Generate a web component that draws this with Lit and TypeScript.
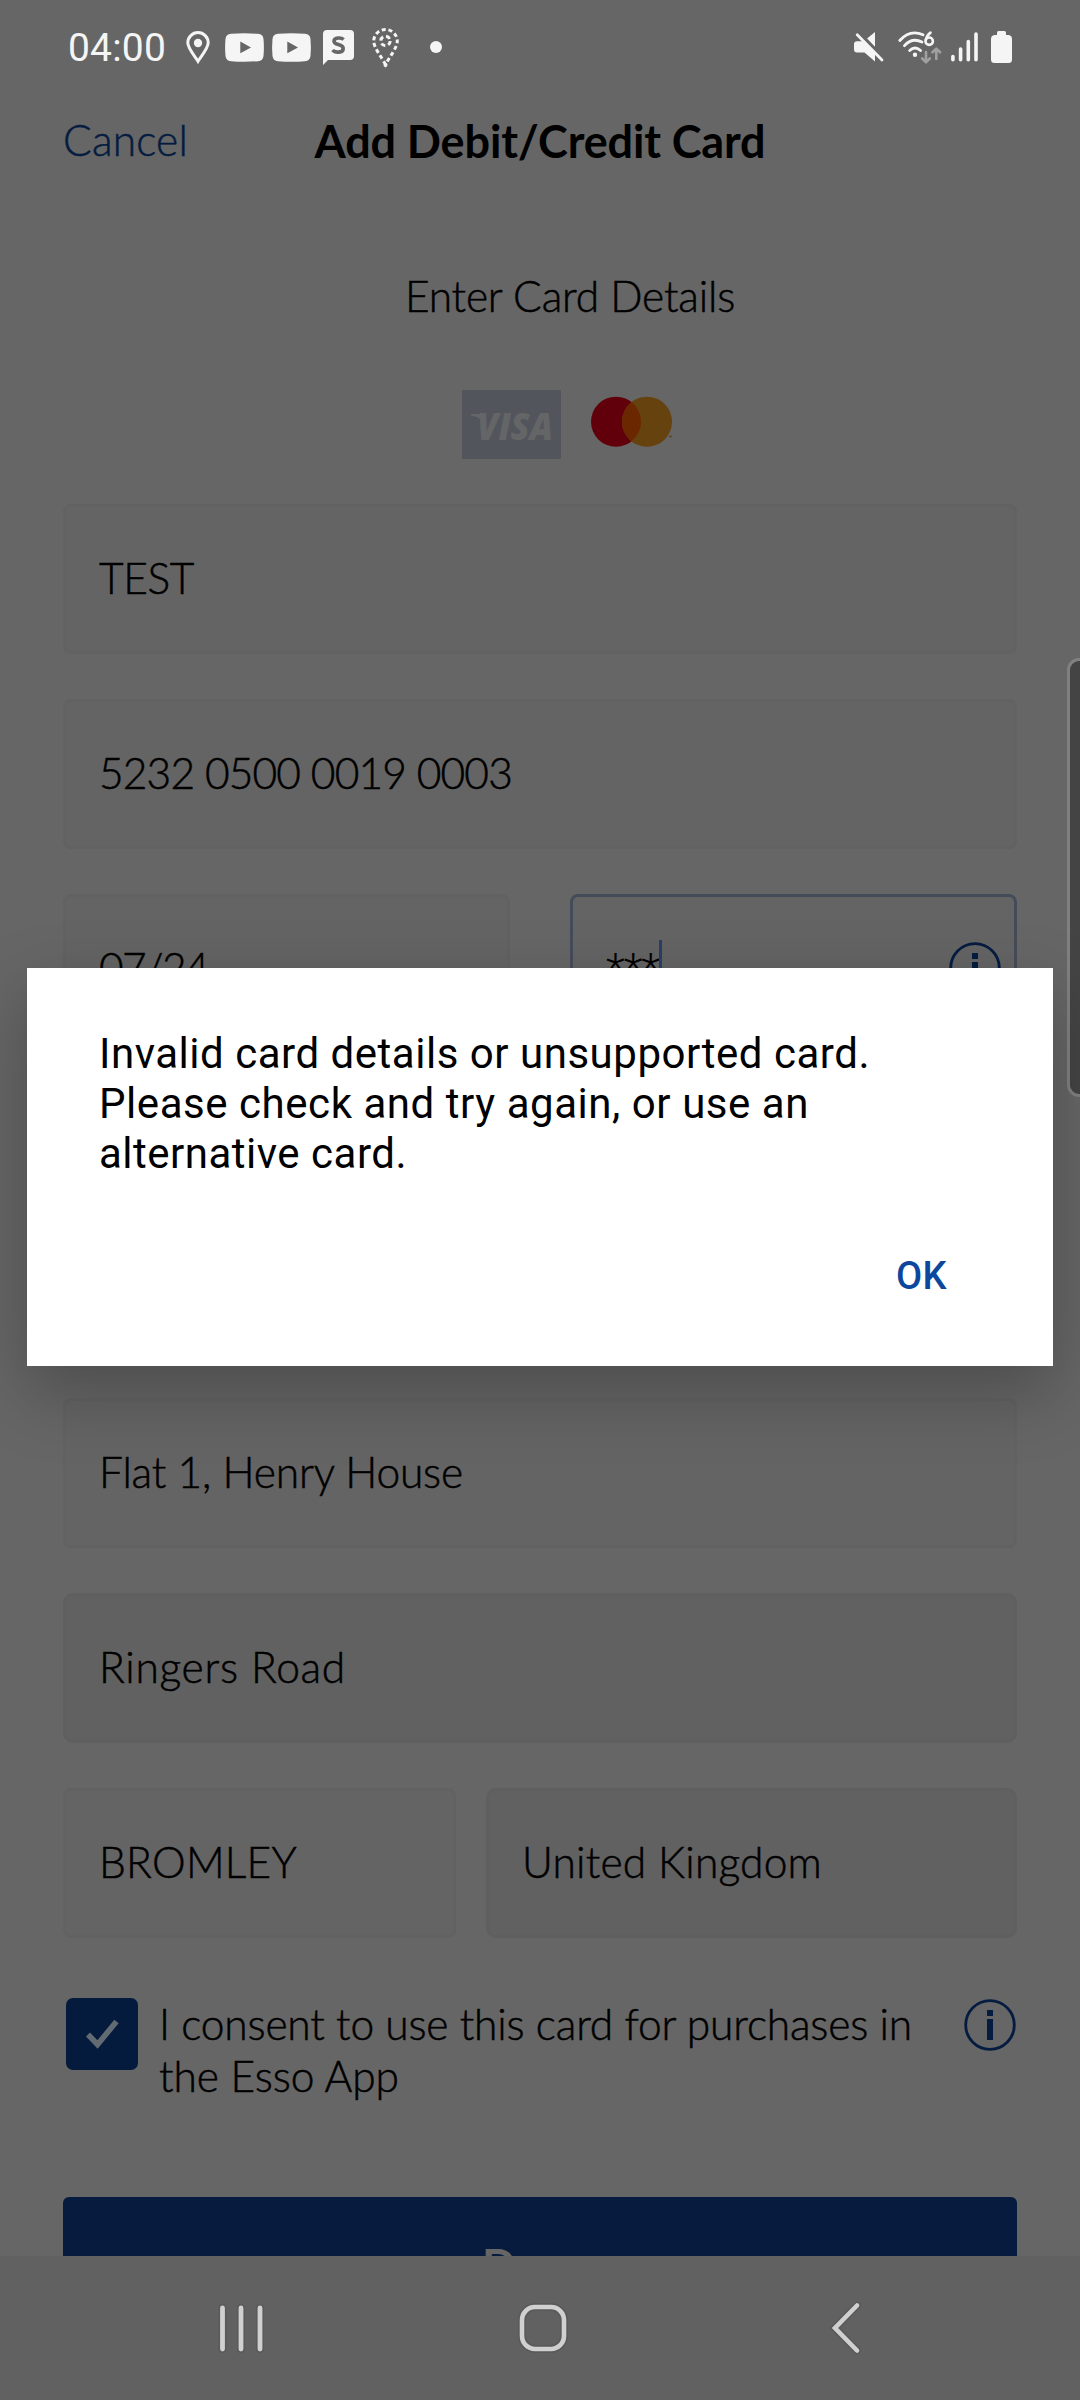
import { LitElement, html, css, svg } from "lit";
import { customElement, property } from "lit/decorators.js";
import { classMap } from "lit/directives/class-map.js";

/** A line of text tracked so that it spans a given advance width. */
@customElement("tracked-text")
class TrackedText extends LitElement {
  static styles = css`
    :host { display: inline-block; white-space: pre; }
  `;
  @property() text = "";
  @property({ type: Number }) span = 0;

  updated() {
    const el = this.renderRoot.querySelector("span") as HTMLElement;
    el.style.letterSpacing = "0px";
    const natural = el.getBoundingClientRect().width;
    el.style.letterSpacing = `${(this.span - natural) / this.text.length}px`;
  }

  render() {
    return html`<span>${this.text}</span>`;
  }
}

@customElement("info-icon")
class InfoIcon extends LitElement {
  static styles = css`
    :host { display: block; width: 52px; height: 52px; }
    svg { display: block; }
  `;
  render() {
    return html`<svg width="52" height="52" viewBox="0 0 52 52">
      <circle cx="26" cy="26" r="24.3" fill="none" stroke="#051c40" stroke-width="2.8" />
      <rect x="23" y="11" width="6" height="6" fill="#051c40" />
      <rect x="23" y="20" width="6" height="21" fill="#051c40" />
    </svg>`;
  }
}

@customElement("form-field")
class FormField extends LitElement {
  static styles = css`
    :host { display: block; }
    .box {
      box-sizing: border-box; height: 150px; border: 3px solid #626262; border-radius: 8px;
      background: #646464; padding: 0 13px 3px 33px;
      display: flex; align-items: center; justify-content: space-between;
    }
    .locked { background: #616161; border-color: #5f5f5f; border-radius: 10px; }
    .focused { border-color: #454c59; }
    .value { display: flex; align-items: center; line-height: 60px; }
    .focused tracked-text { font-family: Roboto, sans-serif; font-weight: 300; font-size: 44px; -webkit-text-stroke: 0; padding-top: 4px; }
    .caret { width: 3px; height: 56px; background: #283f66; }
  `;
  @property() value = "";
  @property({ type: Number }) span = 0;
  @property() kind = "";

  render() {
    const focused = this.kind === "focused";
    return html`<div class=${classMap({ box: true, locked: this.kind === "locked", focused })}>
      <div class="value">
        <tracked-text .text=${this.value} .span=${this.span}></tracked-text>
        ${focused ? html`<div class="caret"></div>` : ""}
      </div>
      ${focused ? html`<info-icon></info-icon>` : ""}
    </div>`;
  }
}

const youtube = html`<svg width="39" height="29" viewBox="0 0 39 29">
  <path fill="#f5f5f5" fill-rule="evenodd" d="M6 .8Q19.500-.4 33 .8Q38 1.200 38.500 6Q39.300 14.500 38.500 23Q38 27.800 33 28.200Q19.500 29.400 6 28.200Q1 27.800.5 23Q-.3 14.500.5 6Q1 1.200 6 .8ZM15.300 8.600V20.200L26 14.400Z" />
</svg>`;

@customElement("status-bar")
class StatusBar extends LitElement {
  static styles = css`
    :host { display: flex; box-sizing: border-box; height: 94px; padding: 0 68px; align-items: center;
      justify-content: space-between; color: #f5f5f5; font-family: Roboto, sans-serif; font-weight: 400; -webkit-text-stroke: 0; }
    .side { display: flex; align-items: center; }
    .time { font-size: 39px; line-height: 46px; width: 118px; padding-top: 1px; }
    svg { display: block; flex: none; overflow: visible; }
    .pin { margin-right: 15px; }
    .tube { margin-right: 8px; }
    .tube.last { margin-right: 12px; }
    .chat { margin-right: 18px; }
    .route { margin-right: 31px; }
    .mute { margin-right: 14px; }
    .wifi { margin-right: 10px; }
    .bars { margin-right: 13px; }
  `;
  render() {
    return html`
      <div class="side">
        <tracked-text class="time" .text=${"04:00"} .span=${98}></tracked-text>
        <svg class="pin" width="24" height="33" viewBox="0 0 24 33">
          <path fill="none" stroke="#f5f5f5" stroke-width="3" d="M12 30.200C9.500 26 1.800 17.500 1.800 11.800A10.200 10.200 0 0 1 22.200 11.800C22.200 17.500 14.500 26 12 30.200Z" />
          <circle cx="12" cy="12" r="4.200" fill="#f5f5f5" />
        </svg>
        <div class="tube">${youtube}</div>
        <div class="tube last">${youtube}</div>
        <svg class="chat" width="31" height="35" viewBox="0 0 31 35">
          <path fill="#f5f5f5" d="M4 0H27Q31 0 31 4V26Q31 30 27 30H5L0 35V4Q0 0 4 0Z" />
          <path fill="none" stroke="#666" stroke-width="3.600" d="M20.600 9.500C18.500 7.500 11 7 11 11.200C11 15.500 20.200 13.500 20.200 18.400C20.200 23.200 12 23 9.600 20" />
        </svg>
        <svg class="route" width="27" height="39" viewBox="0 0 27 39">
          <path fill="none" stroke="#f5f5f5" stroke-width="3" stroke-dasharray="4 2.800" d="M13.500 36.500C10.500 30.500 1.700 19.500 1.700 13.300A11.800 11.800 0 0 1 25.300 13.300C25.300 19.500 16.500 30.500 13.500 36.500Z" />
          <circle cx="13.500" cy="13" r="4.700" fill="none" stroke="#f5f5f5" stroke-width="3" stroke-dasharray="4.400 2.980" />
          <circle cx="13.500" cy="37" r="2" fill="#f5f5f5" />
        </svg>
        <svg width="12" height="12" viewBox="0 0 12 12"><circle cx="6" cy="6" r="6" fill="#f5f5f5" /></svg>
      </div>
      <div class="side">
        <svg class="mute" width="30" height="30" viewBox="0 0 30 30">
          <path fill="#f5f5f5" d="M21 0V15L12.500 7ZM3 9.300H8.500L21 21V29.500L10.500 20.500H3Q0 20.500 0 17.500V12.300Q0 9.300 3 9.300Z" />
          <path stroke="#666" stroke-width="2" d="M6 .4L30.500 26.400" />
          <path stroke="#f5f5f5" stroke-width="2.800" stroke-linecap="round" d="M3.200 2.700L28 28" />
        </svg>
        <svg class="wifi" width="43" height="33" viewBox="0 0 43 33">
          <g fill="none" stroke="#f5f5f5" stroke-width="2.900" stroke-linecap="round">
            <path d="M1.800 9.500Q12 -2 25 3.800" />
            <path d="M6.500 14.600Q14 6.300 24 11" />
            <path d="M11.700 19.500Q17 14.500 22.500 19.500" />
            <path d="M32.500 1.600Q28.500 4.600 27.800 9" stroke-width="2.600" />
            <circle cx="31.200" cy="10.200" r="3.700" stroke-width="2.600" />
          </g>
          <circle cx="17" cy="23.700" r="2.200" fill="#f5f5f5" />
          <g fill="none" stroke="#a0a0a0" stroke-width="2.600" stroke-linecap="round" stroke-linejoin="round">
            <path d="M28 21V31M24.200 27.500L28 31.200L31.800 27.500" />
            <path d="M38.300 28V17.800M34.500 21.300L38.300 17.600L42.100 21.300" />
          </g>
        </svg>
        <svg class="bars" width="27" height="30" viewBox="0 0 27 30">
          <path stroke="#f5f5f5" stroke-width="3.600" stroke-linecap="round" d="M1.900 24.500V27.800M9.600 17V27.800M17.300 9.500V27.800M25 2V27.800" />
        </svg>
        <svg width="21" height="32" viewBox="0 0 21 32">
          <path fill="#f5f5f5" d="M7.500 0H13.500Q15 0 15 2V4H17.500Q21 4.500 21 8V28.500Q21 32 17.500 32H3.500Q0 32 0 28.500V8Q0 4.500 3.500 4H6V2Q6 0 7.500 0Z" />
        </svg>
      </div>`;
  }
}

const halo = (shape: unknown) => svg`
  <g stroke="#5a5a5a" stroke-width="8">${shape}</g>`;

@customElement("nav-bar")
class NavBar extends LitElement {
  static styles = css`
    :host { display: grid; grid-template-columns: 482px 122px 476px; height: 144px; background: #616161; }
    svg { display: block; align-self: center; justify-self: center; overflow: visible; }
    .back { margin-left: 8px; }
  `;
  render() {
    const recents = "M4.500 4V45M23 4V45M42 4V45";
    const back = "M27 4.500L5 27L27 49.500";
    return html`
      <svg width="46" height="49" viewBox="0 0 46 49" fill="none" stroke-linecap="round">
        ${halo(svg`<path d=${recents} />`)}
        <path stroke="#d0d0d0" stroke-width="4.800" d=${recents} />
      </svg>
      <svg width="48" height="48" viewBox="0 0 48 48" fill="none">
        ${halo(svg`<rect x="3" y="3" width="42" height="42" rx="13" />`)}
        <rect x="3" y="3" width="42" height="42" rx="13" stroke="#d0d0d0" stroke-width="4.600" />
      </svg>
      <svg class="back" width="32" height="54" viewBox="0 0 32 54" fill="none" stroke-linecap="round">
        ${halo(svg`<path d=${back} />`)}
        <path stroke="#d0d0d0" stroke-width="4.600" d=${back} />
      </svg>`;
  }
}

@customElement("alert-dialog")
class AlertDialog extends LitElement {
  static styles = css`
    :host { display: flex; flex-direction: column; justify-content: space-between; box-sizing: border-box;
      background: #fff; padding: 61px 106px 59px 72px; font-family: Roboto, sans-serif; font-weight: 400; -webkit-text-stroke: 0;
      box-shadow: 0 26px 64px rgba(0, 0, 0, 0.25); }
    .message { display: flex; flex-direction: column; align-items: flex-start; font-size: 42px; line-height: 50px; color: #000; }
    .ok { align-self: flex-end; font-size: 38px; line-height: 62px; font-weight: 500; color: #0c479d; }
  `;
  render() {
    return html`
      <div class="message">
        <tracked-text .text=${"Invalid card details or unsupported card."} .span=${771}></tracked-text>
        <tracked-text .text=${"Please check and try again, or use an"} .span=${710}></tracked-text>
        <tracked-text .text=${"alternative card."} .span=${308}></tracked-text>
      </div>
      <tracked-text class="ok" .text=${"OK"} .span=${51}></tracked-text>`;
  }
}

@customElement("app-root")
class AppRoot extends LitElement {
  static styles = css`
    :host { display: block; position: relative; width: 1080px; height: 2400px; overflow: hidden; background: #666;
      font-family: Lato, "Open Sans", sans-serif; font-weight: 300; font-size: 42.500px; color: #000; -webkit-text-stroke: 0.500px; }
    .screen { display: flex; flex-direction: column; height: 2400px; }
    .header { display: grid; grid-template-columns: 1fr auto 1fr; align-items: center; height: 92px; padding: 0 63px; line-height: 60px; }
    .cancel { color: #051c40; }
    .title { font-weight: 700; font-size: 45px; -webkit-text-stroke: 0; padding-top: 1px; }
    .form { flex: 1; min-height: 0; overflow: hidden; padding: 80px 63px 0; display: flex; flex-direction: column; }
    .form > * { flex: none; }
    .subtitle { line-height: 60px; text-align: center; padding-left: 60px; }
    .brands { display: flex; gap: 29px; margin: 64px 0 45px 399px; }
    .brands svg { display: block; }
    .visa { font: italic 800 37px "Open Sans", sans-serif; -webkit-text-stroke: 0; }
    .fields { display: flex; flex-direction: column; gap: 45px; }
    .address { margin-top: 354px; }
    .pair { display: grid; grid-template-columns: 447px 447px; gap: 60px; }
    .place { display: grid; grid-template-columns: 393px 531px; gap: 30px; }
    .consent { display: flex; align-items: flex-start; margin: 60px 1px 0 3px; height: 199px; }
    .check { width: 72px; height: 72px; border-radius: 7px; background: #041b3d; }
    .terms { flex: 1; display: flex; flex-direction: column; align-items: flex-start; margin-left: 21px; line-height: 52px; }
    .consent info-icon { margin-top: 1px; }
    .submit { height: 150px; border-radius: 6px; background: #061b3d; color: #666; font-weight: 700; font-size: 45px;
      -webkit-text-stroke: 0; line-height: 137px; text-align: center; }
    .dialog { position: absolute; left: 27px; top: 968px; width: 1026px; height: 398px; }
    .edge { position: absolute; left: 1067px; top: 658px; width: 24px; height: 439px; box-sizing: border-box;
      border: 3px solid #808080; border-radius: 14px; background: #444; }
  `;

  render() {
    return html`
      <div class="screen">
        <status-bar></status-bar>
        <div class="header">
          <div class="cancel"><tracked-text .text=${"Cancel"} .span=${125}></tracked-text></div>
          <tracked-text class="title" .text=${"Add Debit/Credit Card"} .span=${451}></tracked-text>
        </div>
        <div class="form">
          <div class="subtitle"><tracked-text .text=${"Enter Card Details"} .span=${330}></tracked-text></div>
          <div class="brands">
            <svg width="99" height="69" viewBox="0 0 99 69">
              <rect width="99" height="69" fill="#53555d" />
              <text class="visa" x="15" y="50" textLength="76" lengthAdjust="spacingAndGlyphs" fill="#646566">VISA</text>
              <path d="M9 24H21L25 38Q20 27 9 25.500Z" fill="#646566" />
            </svg>
            <svg width="84" height="69" viewBox="0 0 84 69">
              <circle cx="26" cy="31.700" r="25" fill="#61000b" />
              <circle cx="57" cy="31.700" r="25" fill="#66420f" />
              <path d="M41.500 12.100A25 25 0 0 1 41.500 51.300A25 25 0 0 1 41.500 12.100Z" fill="#6a2700" />
              <path d="M79 46.500H82" stroke="#66420f" stroke-width="1.500" />
            </svg>
          </div>
          <div class="fields">
            <form-field .value=${"TEST"} .span=${95}></form-field>
            <form-field .value=${"5232 0500 0019 0003"} .span=${413}></form-field>
            <div class="pair">
              <form-field .value=${"07/24"} .span=${109}></form-field>
              <form-field kind="focused" .value=${"***"} .span=${53}></form-field>
            </div>
          </div>
          <div class="fields address">
            <form-field .value=${"Flat 1, Henry House"} .span=${364}></form-field>
            <form-field kind="locked" .value=${"Ringers Road"} .span=${247}></form-field>
            <div class="place">
              <form-field .value=${"BROMLEY"} .span=${198}></form-field>
              <form-field kind="locked" .value=${"United Kingdom"} .span=${300}></form-field>
            </div>
          </div>
          <div class="consent">
            <svg class="check" viewBox="0 0 72 72"><path d="M22 36.500L31.500 46.500L50.500 23.500" fill="none" stroke="#616b71" stroke-width="5.600" /></svg>
            <div class="terms">
              <tracked-text .text=${"I consent to use this card for purchases in"} .span=${753}></tracked-text>
              <tracked-text .text=${"the Esso App"} .span=${240}></tracked-text>
            </div>
            <info-icon></info-icon>
          </div>
          <div class="submit"><tracked-text .text=${"Done"} .span=${116}></tracked-text></div>
        </div>
        <nav-bar></nav-bar>
      </div>
      <div class="edge"></div>
      <alert-dialog class="dialog"></alert-dialog>`;
  }
}
